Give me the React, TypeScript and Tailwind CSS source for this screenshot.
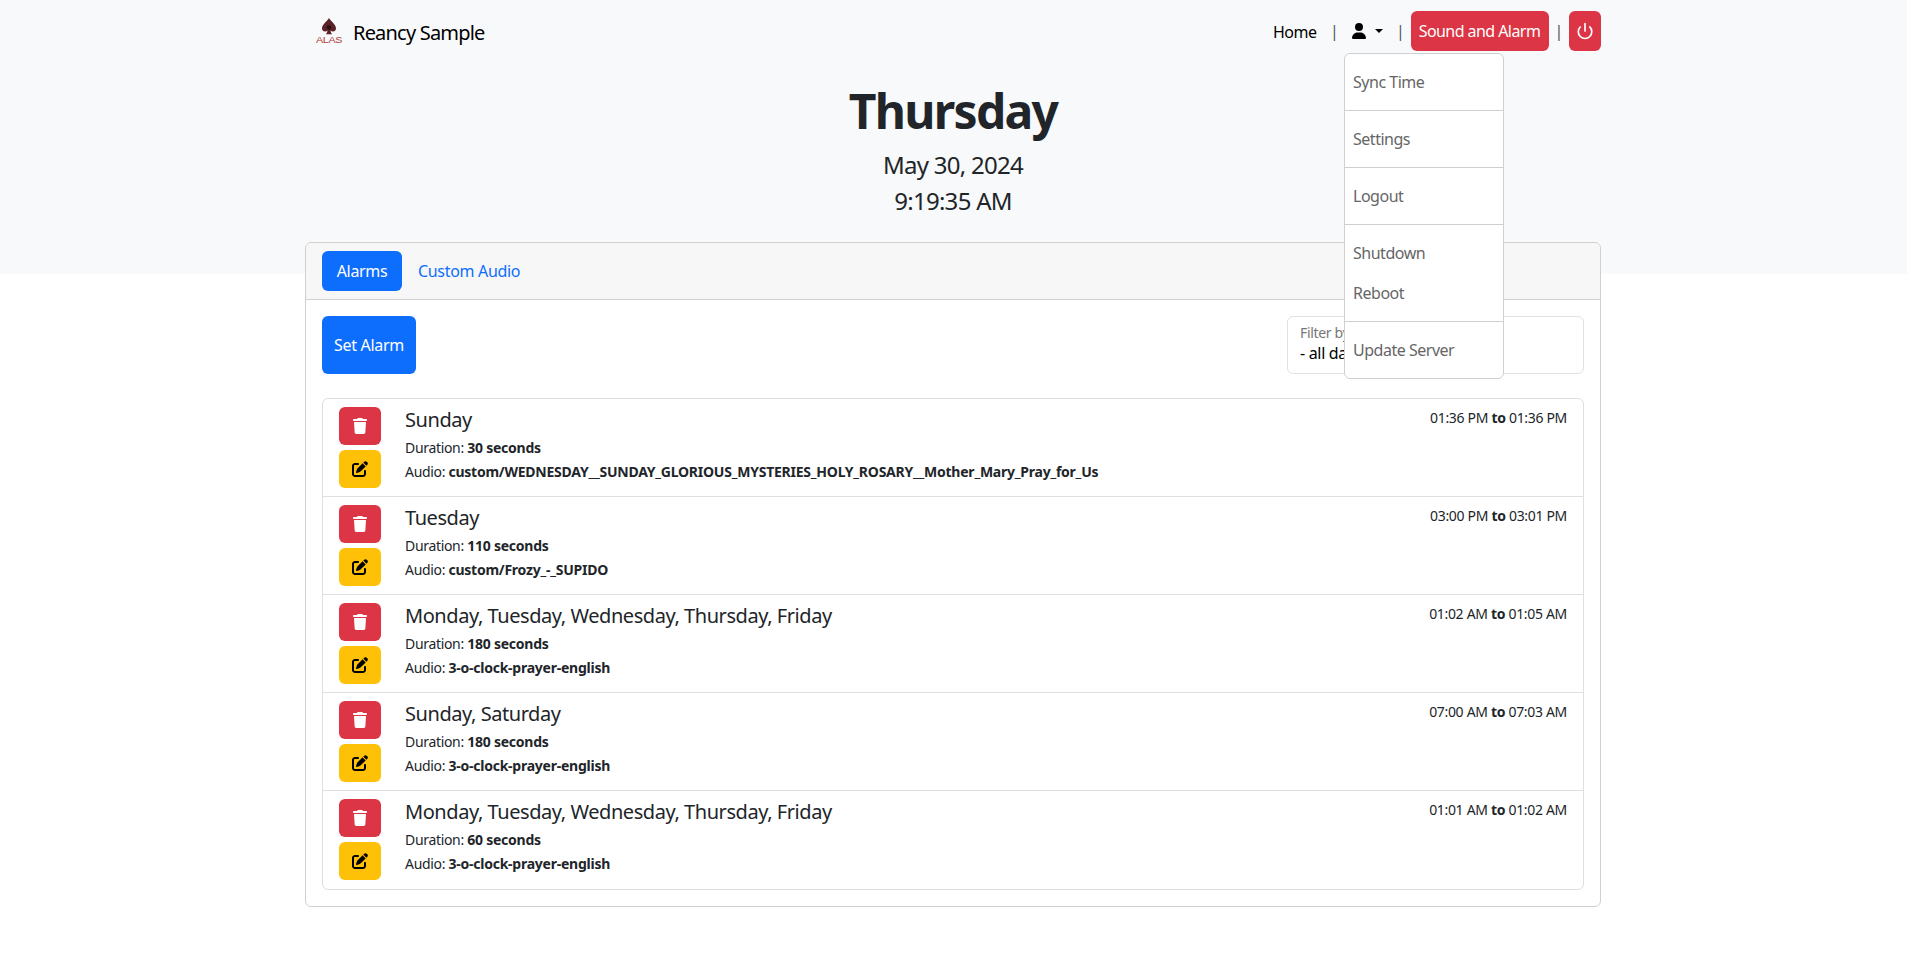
import { FaPenToSquare, FaTrash, FaUser } from 'react-icons/fa6';
import { Power } from 'lucide-react';

const alarms = [
  { days: 'Sunday', time: '01:36 PM', end: '01:36 PM', duration: '30 seconds', audio: 'custom/WEDNESDAY__SUNDAY_GLORIOUS_MYSTERIES_HOLY_ROSARY__Mother_Mary_Pray_for_Us' },
  { days: 'Tuesday', time: '03:00 PM', end: '03:01 PM', duration: '110 seconds', audio: 'custom/Frozy_-_SUPIDO' },
  { days: 'Monday, Tuesday, Wednesday, Thursday, Friday', time: '01:02 AM', end: '01:05 AM', duration: '180 seconds', audio: '3-o-clock-prayer-english' },
  { days: 'Sunday, Saturday', time: '07:00 AM', end: '07:03 AM', duration: '180 seconds', audio: '3-o-clock-prayer-english' },
  { days: 'Monday, Tuesday, Wednesday, Thursday, Friday', time: '01:01 AM', end: '01:02 AM', duration: '60 seconds', audio: '3-o-clock-prayer-english' },
];

const menuSections = [['Sync Time'], ['Settings'], ['Logout'], ['Shutdown', 'Reboot'], ['Update Server']];

const UserMenu = () => (
  <div className="absolute left-[-8px] top-0 z-10 mt-[42px] w-[160px] divide-y divide-[#d0d0d0] rounded-md border border-[#d0d0d0] bg-white text-[16px] leading-6 tracking-[-0.03em] text-[#666]">
    {menuSections.map((section) => (
      <div key={section[0]} className="py-2">
        {section.map((item) => (
          <div key={item} className="px-2 py-2">
            {item}
          </div>
        ))}
      </div>
    ))}
  </div>
);

const Header = () => (
  <nav className="flex h-[62px] items-center justify-between">
    <div className="flex items-center">
      <svg width="28" height="28" viewBox="0 0 28 28" className="ml-[10px] mr-[10px]" aria-hidden="true">
        <path d="M14 1 C16.5 5 21 7.5 21 11.5 C21 14.5 17.5 15.3 15.4 13.6 C15.6 15 16.2 16.2 17 17.2 L11 17.2 C11.8 16.2 12.4 15 12.6 13.6 C10.5 15.3 7 14.5 7 11.5 C7 7.5 11.5 5 14 1 Z" fill="#5a2228" />
        <circle cx="14" cy="10.5" r="2.2" fill="#2a0f12" />
        <text x="14" y="25.5" textAnchor="middle" fontSize="8.5" fill="#b23a3f" textLength="26" lengthAdjust="spacingAndGlyphs" fontFamily="'Liberation Sans', sans-serif">ALAS</text>
      </svg>
      <span className="mt-[3px] text-[20px] tracking-[-0.04em] text-black">Reancy Sample</span>
    </div>
    <div className="flex items-center text-[16px]">
      <span className="mt-[1px] tracking-[-0.03em] text-black">Home</span>
      <span className="mx-[13.5px] text-[#555]">|</span>
      <div className="relative flex h-[40px] items-center">
        <FaUser className="h-[16px] w-[14px] text-black" />
        <span className="ml-[9px] h-0 w-0 border-x-[4.8px] border-t-[4.8px] border-x-transparent border-t-black" />
        <UserMenu />
      </div>
      <span className="ml-[13px] mr-[6px] text-[#555]">|</span>
      <button className="h-[40px] w-[138px] rounded-md bg-[#dc3545] tracking-[-0.035em] text-white">Sound and Alarm</button>
      <span className="mx-[6px] text-[#555]">|</span>
      <button className="flex h-[40px] w-[32px] items-center justify-center rounded-md bg-[#dc3545] text-white">
        <Power size={18} strokeWidth={2.25} />
      </button>
    </div>
  </nav>
);

const AlarmRow = ({ alarm, last }: { alarm: (typeof alarms)[number]; last: boolean }) => (
  <div className={`flex h-[98px] px-4 ${last ? '' : 'border-b border-[#dfdfdf]'}`}>
    <div className="flex w-[66px] shrink-0 flex-col gap-[5px] pt-2">
      <button className="flex h-[38px] w-[42px] items-center justify-center rounded-md bg-[#dc3545] text-white">
        <FaTrash size={16} />
      </button>
      <button className="flex h-[38px] w-[42px] items-center justify-center rounded-md bg-[#ffc107] text-black">
        <FaPenToSquare size={16} />
      </button>
    </div>
    <div className="flex-1">
      <div className="mt-[9px] text-[20px] leading-[24px] tracking-[-0.022em] text-[#212529]">{alarm.days}</div>
      <div className="mt-[4px] text-[14px] leading-[24px] text-[#212529]">
        Duration: <b className="tracking-[-0.017em]">{alarm.duration}</b>
      </div>
      <div className="text-[14px] leading-[24px] text-[#212529]">
        Audio: <b className="tracking-[-0.017em]">{alarm.audio}</b>
      </div>
    </div>
    <div className="pt-[8px] text-[14px] leading-[21px] text-[#212529]">
      {alarm.time} <b>to</b> {alarm.end}
    </div>
  </div>
);

export default function App() {
  return (
    <div className="min-h-[954px] bg-white font-['Noto_Sans','Open_Sans',sans-serif] text-[16px] tracking-[-0.02em] text-[#212529]">
      <div className="h-[274px] bg-[#f8f9fa]">
        <div className="ml-[305px] w-[1296px]">
          <Header />
          <div className="text-center">
            <h1 className="mt-[20px] text-[48px] font-bold leading-[58px] tracking-[-0.035em] text-[#212529]">Thursday</h1>
            <div className="mt-[7px] text-[24px] leading-[36px] tracking-[-0.03em]">May 30, 2024</div>
            <div className="text-[24px] leading-[36px] tracking-[-0.03em]">9:19:35 AM</div>
          </div>
        </div>
      </div>
      <div className="ml-[305px] mt-[-32px] w-[1296px] rounded-md border border-[#d0d0d0] bg-white">
        <div className="flex h-[57px] items-start rounded-t-md border-b border-[#d0d0d0] bg-[#f7f7f7] px-4 pt-[8px]">
          <button className="h-[40px] w-[80px] rounded-md bg-[#0d6efd] text-white">Alarms</button>
          <button className="h-[40px] px-4 text-[#0d6efd]">Custom Audio</button>
        </div>
        <div className="p-4">
          <div className="flex justify-between">
            <button className="h-[58px] w-[94px] rounded-md bg-[#0d6efd] text-white">Set Alarm</button>
            <div className="h-[58px] w-[297px] rounded-md border border-[#dee2e6] px-3 pt-[8px]">
              <div className="text-[14px] leading-[16px] text-[#777]">Filter by day</div>
              <div className="text-[16px] leading-[24px] text-black">- all days -</div>
            </div>
          </div>
          <div className="mt-[24px] rounded-md border border-[#dfdfdf]">
            {alarms.map((alarm, i) => (
              <AlarmRow key={i} alarm={alarm} last={i === alarms.length - 1} />
            ))}
          </div>
        </div>
      </div>
    </div>
  );
}
